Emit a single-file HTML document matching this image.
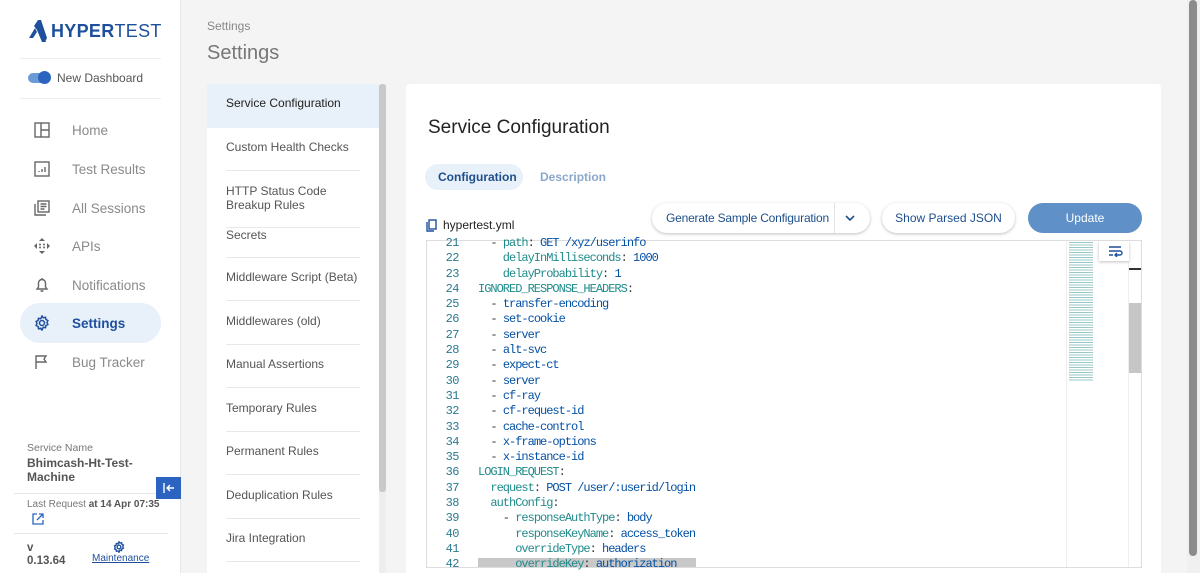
<!DOCTYPE html>
<html><head><meta charset="utf-8">
<style>
*{box-sizing:border-box;margin:0;padding:0}
html,body{width:1200px;height:573px;overflow:hidden}
body{background:#f4f4f4;font-family:"Liberation Sans",sans-serif;position:relative}
.abs{position:absolute}
.sb{left:0;top:0;width:181px;height:573px;background:#fff;border-right:1px solid #e6e6e6}
.nav{left:20px;width:141px;height:40px;border-radius:20px;font-size:13.5px;color:#8a8a8a;display:flex;align-items:center;padding-left:52px}
.nav svg{position:absolute;left:14px;top:12px}
.mi{left:207px;width:172px;font-size:12px;color:#555;padding-left:19px}
.sep{left:226px;width:134px;height:1px;background:#e8e8e8}
.code{font-family:"Liberation Mono",monospace;font-size:12px;letter-spacing:-1px;white-space:pre;line-height:15.3px}
.k{color:#1f8a8a}.v{color:#0451a5}.p{color:#333}
.ln{color:#2b7a90;text-align:right;width:32px;left:427px;letter-spacing:-0.5px}
</style></head><body>
<div class="abs sb"></div>
<svg class="abs" style="left:28px;top:18px" width="20" height="26" viewBox="0 0 20 26"><path d="M1 20 L7 10 L9 14 L5 20Z M6 8 L10 2 L18 24 L14 24 L9 12Z" fill="#1e4f9c"/><path d="M10 2 L13 2 L19 20 L17 24Z" fill="#1e4f9c"/></svg>
<div class="abs" style="left:51px;top:21px;font-size:18px;font-weight:bold;color:#1e4f9c;letter-spacing:0.3px">HYPER<span style="font-weight:normal">TEST</span></div>
<div class="abs" style="left:20px;top:58px;width:141px;height:1px;background:#eee"></div>
<div class="abs" style="left:28px;top:73px;width:22px;height:10px;border-radius:5px;background:#6b9bd6"></div>
<div class="abs" style="left:38px;top:71px;width:13px;height:13px;border-radius:7px;background:#2a64c0"></div>
<div class="abs" style="left:57px;top:71px;font-size:12px;color:#555">New Dashboard</div>
<div class="abs" style="left:20px;top:98px;width:141px;height:1px;background:#eee"></div>
<div class="abs nav" style="top:110px"><svg width="16" height="16" viewBox="0 0 16 16" fill="none" stroke="#666" stroke-width="1.4"><rect x="1" y="1" width="14" height="14"/><path d="M7 1v14M7 8h8"/></svg>Home</div>
<div class="abs nav" style="top:149px"><svg width="16" height="16" viewBox="0 0 16 16" fill="none" stroke="#666" stroke-width="1.4"><rect x="1" y="1" width="14" height="14"/><path d="M5 11v-1M8 11v-3M11 11v-5"/></svg>Test Results</div>
<div class="abs nav" style="top:188px"><svg width="16" height="16" viewBox="0 0 16 16" fill="none" stroke="#666" stroke-width="1.4"><path d="M1 4v11h11"/><rect x="4" y="1" width="11" height="11"/><path d="M6.5 4h6M6.5 6.5h6M6.5 9h4"/></svg>All Sessions</div>
<div class="abs nav" style="top:226px"><svg width="16" height="16" viewBox="0 0 16 16" fill="#666"><path d="M8 0l3 3H5zM8 16l3-3H5zM0 8l3-3v6zM16 8l-3-3v6z"/><circle cx="6" cy="6.5" r="1"/><circle cx="10" cy="6.5" r="1"/><circle cx="6" cy="9.5" r="1"/><circle cx="10" cy="9.5" r="1"/></svg>APIs</div>
<div class="abs nav" style="top:265px"><svg width="16" height="16" viewBox="0 0 16 16" fill="none" stroke="#666" stroke-width="1.4"><path d="M3 12h10l-1.5-2V6a3.5 3.5 0 0 0-7 0v4zM6.5 14h3M8 1v1"/></svg>Notifications</div>
<div class="abs nav" style="top:303px;background:#e8f0f9;color:#1e4f9c;font-weight:bold"><svg width="16" height="16" viewBox="0 0 16 16" fill="none" stroke="#1e4f9c" stroke-width="1.5"><circle cx="8" cy="8" r="2.5"/><path d="M8 1l1.3 1.8 2.2-.5.4 2.2 2 1-.9 2 .9 2-2 1-.4 2.2-2.2-.5L8 15l-1.3-1.8-2.2.5-.4-2.2-2-1 .9-2-.9-2 2-1 .4-2.2 2.2.5z"/></svg>Settings</div>
<div class="abs nav" style="top:342px"><svg width="16" height="16" viewBox="0 0 16 16" fill="none" stroke="#666" stroke-width="1.4"><path d="M2 15V2h10l-2 3 2 3H2"/></svg>Bug Tracker</div>
<div class="abs" style="left:27px;top:442px;font-size:10.5px;color:#777">Service Name</div>
<div class="abs" style="left:27px;top:456px;font-size:12px;color:#555;font-weight:bold;line-height:14px">Bhimcash-Ht-Test-<br>Machine</div>
<div class="abs" style="left:14px;top:493px;width:154px;height:1px;background:#e6e6e6"></div>
<div class="abs" style="left:156px;top:477px;width:25px;height:22px;background:#2a64c0"></div>
<svg class="abs" style="left:161px;top:480px" width="16" height="16" viewBox="0 0 16 16" fill="none" stroke="#fff" stroke-width="1.4"><path d="M3 3v10M13 8H6M9 5L6 8l3 3"/></svg>
<div class="abs" style="left:27px;top:499px;font-size:10px;color:#777">Last Request <b style="color:#555">at 14 Apr 07:35</b></div>
<svg class="abs" style="left:32px;top:513px" width="12" height="12" viewBox="0 0 12 12" fill="none" stroke="#2a64c0" stroke-width="1.3"><path d="M5 1H1v10h10V7M7 1h4v4M11 1L5 7"/></svg>
<div class="abs" style="left:14px;top:533px;width:154px;height:1px;background:#e6e6e6"></div>
<div class="abs" style="left:27px;top:542px;font-size:11.5px;color:#555;font-weight:bold;line-height:13px">v<br>0.13.64</div>
<svg class="abs" style="left:113px;top:541px" width="12" height="12" viewBox="0 0 16 16" fill="none" stroke="#1e4f9c" stroke-width="1.8"><circle cx="8" cy="8" r="2.5"/><path d="M8 1l1.3 1.8 2.2-.5.4 2.2 2 1-.9 2 .9 2-2 1-.4 2.2-2.2-.5L8 15l-1.3-1.8-2.2.5-.4-2.2-2-1 .9-2-.9-2 2-1 .4-2.2 2.2.5z"/></svg>
<div class="abs" style="left:92px;top:553px;font-size:10px;color:#1e4f9c;text-decoration:underline">Maintenance</div>

<div class="abs" style="left:207px;top:19px;font-size:12px;color:#888">Settings</div>
<div class="abs" style="left:207px;top:42px;font-size:20px;color:#777">Settings</div>

<div class="abs" style="left:207px;top:84px;width:172px;height:489px;background:#fff"></div>
<div class="abs" style="left:207px;top:84px;width:172px;height:44px;background:#e8f0f9"></div>
<div class="abs" style="left:379px;top:84px;width:7px;height:489px;background:#eee"></div>
<div class="abs" style="left:379px;top:84px;width:7px;height:408px;background:#c9c9c9;border-radius:3px"></div>
<div class="abs mi" style="top:96px;color:#222">Service Configuration</div>
<div class="abs mi" style="top:140px">Custom Health Checks</div>
<div class="abs sep" style="top:170px"></div>
<div class="abs mi" style="top:184px;line-height:14px">HTTP Status Code<br>Breakup Rules</div>
<div class="abs sep" style="top:227px"></div>
<div class="abs mi" style="top:228px">Secrets</div>
<div class="abs sep" style="top:257px"></div>
<div class="abs mi" style="top:270px">Middleware Script (Beta)</div>
<div class="abs sep" style="top:300px"></div>
<div class="abs mi" style="top:314px">Middlewares (old)</div>
<div class="abs sep" style="top:344px"></div>
<div class="abs mi" style="top:357px">Manual Assertions</div>
<div class="abs sep" style="top:387px"></div>
<div class="abs mi" style="top:401px">Temporary Rules</div>
<div class="abs sep" style="top:431px"></div>
<div class="abs mi" style="top:444px">Permanent Rules</div>
<div class="abs sep" style="top:474px"></div>
<div class="abs mi" style="top:488px">Deduplication Rules</div>
<div class="abs sep" style="top:518px"></div>
<div class="abs mi" style="top:531px">Jira Integration</div>
<div class="abs sep" style="top:561px"></div>

<div class="abs" style="left:406px;top:84px;width:755px;height:489px;background:#fff;border-radius:4px 4px 0 0"></div>
<div class="abs" style="left:428px;top:117px;font-size:19px;color:#222">Service Configuration</div>
<div class="abs" style="left:425px;top:164px;width:98px;height:26px;border-radius:13px;background:#e8f0f9"></div>
<div class="abs" style="left:438px;top:170px;font-size:12px;font-weight:bold;color:#1e4f8c">Configuration</div>
<div class="abs" style="left:540px;top:170px;font-size:12px;font-weight:bold;color:#8aa8cc">Description</div>
<svg class="abs" style="left:426px;top:219px" width="11" height="13" viewBox="0 0 11 13" fill="none" stroke="#1e4f9c" stroke-width="1.4"><path d="M1 3v9h7"/><rect x="3" y="1" width="7" height="9"/></svg>
<div class="abs" style="left:443px;top:218px;font-size:12px;color:#222">hypertest.yml</div>
<div class="abs" style="left:652px;top:203px;width:218px;height:30px;border-radius:15px;background:#fff;box-shadow:0 1px 3px rgba(0,0,0,.25)"></div>
<div class="abs" style="left:834px;top:203px;width:1px;height:30px;background:#e3e3e3"></div>
<div class="abs" style="left:666px;top:211px;font-size:12px;color:#1e4f8c;letter-spacing:-0.2px">Generate Sample Configuration</div>
<svg class="abs" style="left:845px;top:214px" width="10" height="8" viewBox="0 0 10 8" fill="none" stroke="#1e4f8c" stroke-width="1.6"><path d="M1 2l4 4 4-4"/></svg>
<div class="abs" style="left:882px;top:203px;width:133px;height:30px;border-radius:15px;background:#fff;box-shadow:0 1px 3px rgba(0,0,0,.25)"></div>
<div class="abs" style="left:882px;top:211px;width:133px;text-align:center;font-size:12px;color:#1e4f8c">Show Parsed JSON</div>
<div class="abs" style="left:1028px;top:203px;width:114px;height:30px;border-radius:15px;background:#5f90c8"></div>
<div class="abs" style="left:1028px;top:211px;width:114px;text-align:center;font-size:12px;color:#fff">Update</div>

<div class="abs" style="left:426px;top:240px;width:716px;height:328px;border:1px solid #ddd;overflow:hidden;background:#fff">
<div class="abs" style="left:51px;top:317px;width:218px;height:14px;background:#c8c8c8"></div>
<div class="abs" style="left:639px;top:0;width:1px;height:328px;background:#eee"></div>
<div class="abs" style="left:701px;top:0;width:14px;height:328px;border-left:1px solid #eee"></div>
<div class="abs" style="left:702px;top:62px;width:12px;height:70px;background:#c6c6c6"></div>
<div class="abs" style="left:702px;top:27px;width:12px;height:2px;background:#333"></div>
<div class="abs" style="left:642px;top:1px;width:24px;height:140px;background:repeating-linear-gradient(#6bb0b0 0 1px,#fff 1px 2.5px);opacity:.7"></div>
<div class="abs" style="left:672px;top:0;width:30px;height:20px;background:#fff;box-shadow:0 1px 3px rgba(0,0,0,.25)"></div>
<svg class="abs" style="left:680px;top:4px" width="16" height="12" viewBox="0 0 16 12" fill="none" stroke="#1e4f9c" stroke-width="1.4"><path d="M2 2h12M2 6h11a2 2 0 0 1 0 4H9M10 8l-2 2 2 2M2 10h4"/></svg>
</div>
<div class="abs code ln" style="top:236px">21
22
23
24
25
26
27
28
29
30
31
32
33
34
35
36
37
38
39
40
41
42</div>
<div class="abs code" style="left:478px;top:236px"><span class="p">  - </span><span class="k">path</span><span class="p">: </span><span class="v">GET /xyz/userinfo</span>
<span class="k">    delayInMilliseconds</span><span class="p">: </span><span class="v">1000</span>
<span class="k">    delayProbability</span><span class="p">: </span><span class="v">1</span>
<span class="k">IGNORED_RESPONSE_HEADERS</span><span class="p">:</span>
<span class="p">  - </span><span class="v">transfer-encoding</span>
<span class="p">  - </span><span class="v">set-cookie</span>
<span class="p">  - </span><span class="v">server</span>
<span class="p">  - </span><span class="v">alt-svc</span>
<span class="p">  - </span><span class="v">expect-ct</span>
<span class="p">  - </span><span class="v">server</span>
<span class="p">  - </span><span class="v">cf-ray</span>
<span class="p">  - </span><span class="v">cf-request-id</span>
<span class="p">  - </span><span class="v">cache-control</span>
<span class="p">  - </span><span class="v">x-frame-options</span>
<span class="p">  - </span><span class="v">x-instance-id</span>
<span class="k">LOGIN_REQUEST</span><span class="p">:</span>
<span class="k">  request</span><span class="p">: </span><span class="v">POST /user/:userid/login</span>
<span class="k">  authConfig</span><span class="p">:</span>
<span class="p">    - </span><span class="k">responseAuthType</span><span class="p">: </span><span class="v">body</span>
<span class="k">      responseKeyName</span><span class="p">: </span><span class="v">access_token</span>
<span class="k">      overrideType</span><span class="p">: </span><span class="v">headers</span>
<span class="k">      overrideKey</span><span class="p">: </span><span class="v">authorization</span></div>

<div class="abs" style="left:1187px;top:0;width:13px;height:573px;background:#f0f0f0"></div>
<div class="abs" style="left:1189px;top:0;width:8px;height:556px;background:#8c8c8c;border-radius:4px"></div>
</body></html>
